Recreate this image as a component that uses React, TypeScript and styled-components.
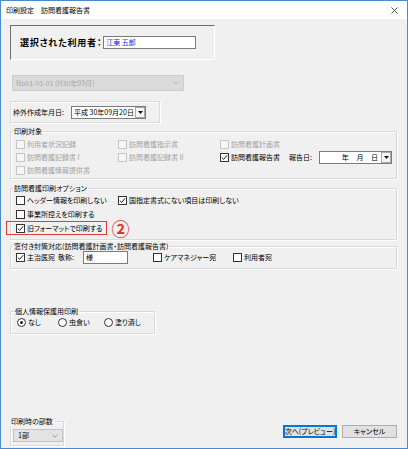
import React from 'react';
import styled, { createGlobalStyle } from 'styled-components';

const Global = createGlobalStyle`
  html, body { margin: 0; padding: 0; background: #ffffff; }
  body { font-family: "Noto Sans CJK JP", "Noto Sans", sans-serif; font-size: 7px; color: #000; }
  * { box-sizing: border-box; }
`;

const Window = styled.div`
  width: 408px;
  height: 449px;
  border: 1px solid #4a8bcf;
  background: #f0f0f0;
  display: flex;
  flex-direction: column;
  overflow: hidden;
  font-feature-settings: "palt";
`;

const TitleBar = styled.div`
  height: 18px;
  background: #ffffff;
  display: flex;
  align-items: center;
  justify-content: space-between;
  padding: 0 9px 0 5px;
  font-size: 7px;
  line-height: 9px;
`;

const Content = styled.div`
  flex: 1;
  display: flex;
  flex-direction: column;
  align-items: flex-start;
  padding: 6px 10px 2px 9px;
`;

const UserFrame = styled.div`
  width: 205px;
  height: 35px;
  border-top: 1px solid #6e6e6e;
  border-left: 1px solid #6e6e6e;
  border-right: 1px solid #ffffff;
  border-bottom: 1px solid #ffffff;
  display: flex;
  align-items: center;
  padding-left: 9px;
`;

const UserLabel = styled.span`
  font-weight: 700;
  font-size: 9px;
  letter-spacing: 0.8px;
  line-height: 12px;
  margin-right: 1px;
`;

const TextBox = styled.div<{ $w: number; $blue?: boolean }>`
  width: ${p => p.$w}px;
  height: 13px;
  flex-shrink: 0;
  background: #ffffff;
  border: 1px solid #7a7a7a;
  display: flex;
  align-items: center;
  padding-left: 2px;
  color: ${p => (p.$blue ? '#1a1ae6' : '#000')};
  line-height: 9px;
`;

const DisabledCombo = styled.div`
  margin: 15px 0 0 2px;
  width: 172px;
  height: 16px;
  background: #dadada;
  border: 1px solid #cdcdcd;
  color: #a6a6a6;
  display: flex;
  align-items: center;
  justify-content: space-between;
  padding: 0 4px 0 3px;
  line-height: 9px;
`;

const DateFrame = styled.div`
  margin-top: 10px;
  width: 150px;
  height: 22px;
  border: 1px solid #dadada;
  box-shadow: inset 1px 1px 0 #ffffff, 1px 1px 0 #ffffff;
  display: flex;
  align-items: center;
  padding-left: 2px;
`;

const FieldLabel = styled.span<{ $w?: number }>`
  ${p => (p.$w ? `width: ${p.$w}px;` : '')}
  line-height: 9px;
  white-space: nowrap;
  flex-shrink: 0;
`;

const DateBox = styled.div<{ $w: number }>`
  width: ${p => p.$w}px;
  height: 13px;
  flex-shrink: 0;
  background: #ffffff;
  border: 1px solid #7a7a7a;
  display: flex;
  align-items: center;
  justify-content: space-between;
  padding: 0 0 0 2px;
  line-height: 9px;
  white-space: nowrap;
`;

const DateText = styled.span<{ $right?: boolean }>`
  flex: 1;
  text-align: ${p => (p.$right ? 'right' : 'left')};
  padding-right: ${p => (p.$right ? '3px' : '0')};
  word-spacing: ${p => (p.$right ? '6px' : '0')};
`;

const DropBtn = styled.span`
  width: 10px;
  height: 11px;
  border: 1px solid #a8a8a8;
  background: #f4f4f4;
  display: flex;
  align-items: center;
  justify-content: center;
  flex-shrink: 0;
`;

const Group = styled.fieldset<{ $w?: number; $mt: number; $pt?: number; $pb?: number; $pl?: number }>`
  margin: ${p => p.$mt}px 0 0 0;
  padding: ${p => p.$pt ?? 0}px 4px ${p => p.$pb ?? 0}px ${p => p.$pl ?? 5}px;
  border: 1px solid #d9d9d9;
  box-shadow: inset 1px 1px 0 #ffffff, 1px 1px 0 #ffffff;
  width: ${p => (p.$w ? `${p.$w}px` : '100%')};
  min-width: 0;
`;

const Legend = styled.legend`
  padding: 0 1px;
  margin-left: -3px;
  font-size: 7px;
  line-height: 9px;
  height: 9px;
  white-space: nowrap;
`;

const Grid = styled.div<{ $row: number }>`
  display: grid;
  grid-template-columns: 102px 102px 1fr;
  grid-auto-rows: ${p => p.$row}px;
  align-items: center;
`;

const Row = styled.div<{ $h: number; $span?: boolean }>`
  height: ${p => p.$h}px;
  display: flex;
  align-items: center;
  ${p => (p.$span ? 'grid-column: 1 / span 2;' : '')}
`;

const Item = styled.label<{ $disabled?: boolean; $w?: number }>`
  display: flex;
  align-items: center;
  gap: 2px;
  color: ${p => (p.$disabled ? '#a3a3a3' : '#000')};
  line-height: 9px;
  white-space: nowrap;
  flex-shrink: 0;
  ${p => (p.$w ? `width: ${p.$w}px;` : '')}
`;

const Box = styled.span<{ $disabled?: boolean }>`
  width: 9px;
  height: 9px;
  flex-shrink: 0;
  border: 1px solid ${p => (p.$disabled ? '#c6c6c6' : '#333333')};
  background: ${p => (p.$disabled ? '#f6f6f6' : '#ffffff')};
  display: flex;
  align-items: center;
  justify-content: center;
`;

const Radio = styled.span<{ $on?: boolean }>`
  width: 9px;
  height: 9px;
  flex-shrink: 0;
  border: 1px solid #333333;
  border-radius: 50%;
  background: #ffffff;
  display: flex;
  align-items: center;
  justify-content: center;
  &::after {
    content: '';
    width: 3px;
    height: 3px;
    border-radius: 50%;
    background: ${p => (p.$on ? '#222' : 'transparent')};
  }
`;

const Highlight = styled.div`
  height: 14px;
  margin-left: -10px;
  border: 1px solid #e23b36;
  padding: 0 4px 0 9px;
  display: flex;
  align-items: center;
`;

const Circled = styled.span`
  margin-left: 4px;
  color: #e5302c;
  font-size: 18px;
  font-weight: 700;
  line-height: 14px;
`;

const Spacer = styled.span<{ $w: number }>`
  width: ${p => p.$w}px;
  flex-shrink: 0;
`;

const BottomBar = styled.div`
  margin-top: auto;
  width: 100%;
  display: flex;
  justify-content: space-between;
  align-items: flex-end;
`;

const CopyCombo = styled.div`
  width: 50px;
  height: 13px;
  background: #e3e3e3;
  border: 1px solid #c4c4c4;
  display: flex;
  align-items: center;
  justify-content: space-between;
  padding: 0 4px 0 4px;
  line-height: 9px;
`;

const Buttons = styled.div`
  display: flex;
  gap: 5px;
  margin-bottom: 8px;
`;

const Button = styled.button<{ $default?: boolean }>`
  width: ${p => (p.$default ? 54 : 55)}px;
  height: 13px;
  padding: 0;
  margin: 0;
  font-family: inherit;
  font-size: 7px;
  line-height: 9px;
  color: #000;
  background: #e1e1e1;
  border: 1px solid ${p => (p.$default ? '#0078d7' : '#adadad')};
  box-shadow: ${p => (p.$default ? 'inset 0 0 0 1px #0078d7' : 'none')};
  font-feature-settings: "palt";
`;

const Check = () => (
  <svg width="7" height="7" viewBox="0 0 7 7">
    <path d="M0.8 3.6 L2.7 5.4 L6.2 1.2" fill="none" stroke="#222" strokeWidth="1" />
  </svg>
);

const Chevron = ({ color }: { color: string }) => (
  <svg width="6" height="4" viewBox="0 0 6 4">
    <path d="M0.5 0.8 L3 3.2 L5.5 0.8" fill="none" stroke={color} strokeWidth="0.8" />
  </svg>
);

const Tri = () => (
  <svg width="5" height="3" viewBox="0 0 5 3">
    <path d="M0 0 H5 L2.5 3 Z" fill="#111" />
  </svg>
);

const CheckItem = ({ label, checked, disabled, w }: { label: string; checked?: boolean; disabled?: boolean; w?: number }) => (
  <Item $disabled={disabled} $w={w}>
    <Box $disabled={disabled}>{checked && <Check />}</Box>
    <span>{label}</span>
  </Item>
);

const RadioItem = ({ label, on, w }: { label: string; on?: boolean; w?: number }) => (
  <Item $w={w}>
    <Radio $on={on} />
    <span>{label}</span>
  </Item>
);

export default function App() {
  return (
    <>
      <Global />
      <Window>
        <TitleBar>
          <span>印刷設定　訪問看護報告書</span>
          <svg width="7" height="7" viewBox="0 0 7 7">
            <path d="M0.5 0.5 L6.5 6.5 M6.5 0.5 L0.5 6.5" stroke="#222" strokeWidth="0.8" />
          </svg>
        </TitleBar>
        <Content>
          <UserFrame>
            <UserLabel>選択された利用者：</UserLabel>
            <TextBox $w={93} $blue>江東 五郎</TextBox>
          </UserFrame>

          <DisabledCombo>
            <span>No01-01-01 (H30年09月)</span>
            <Chevron color="#b5b5b5" />
          </DisabledCombo>

          <DateFrame>
            <FieldLabel $w={58}>枠外作成年月日:</FieldLabel>
            <DateBox $w={75}>
              <DateText>平成 30年09月20日</DateText>
              <DropBtn><Tri /></DropBtn>
            </DateBox>
          </DateFrame>

          <Group $mt={4} $pt={2} $pb={1}>
            <Legend>印刷対象</Legend>
            <Grid $row={13}>
              <CheckItem label="利用者状況記録" disabled />
              <CheckItem label="訪問看護指示書" disabled />
              <CheckItem label="訪問看護計画書" disabled />
              <CheckItem label="訪問看護記録書 I" disabled />
              <CheckItem label="訪問看護記録書 II" disabled />
              <Row $h={13}>
                <CheckItem label="訪問看護報告書" checked w={69} />
                <FieldLabel $w={30}>報告日:</FieldLabel>
                <DateBox $w={73}>
                  <DateText $right>年 月 日</DateText>
                  <DropBtn><Tri /></DropBtn>
                </DateBox>
              </Row>
              <CheckItem label="訪問看護情報提供書" disabled />
            </Grid>
          </Group>

          <Group $mt={5} $pt={0} $pb={4}>
            <Legend>訪問看護印刷オプション</Legend>
            <Grid $row={14}>
              <CheckItem label="ヘッダー情報を印刷しない" />
              <CheckItem label="国指定書式にない項目は印刷しない" checked />
              <span />
              <CheckItem label="事業所控えを印刷する" />
              <span />
              <span />
              <Row $h={14} $span>
                <Highlight>
                  <CheckItem label="旧フォーマットで印刷する" checked />
                </Highlight>
                <Circled>②</Circled>
              </Row>
            </Grid>
          </Group>

          <Group $mt={2} $pt={0} $pb={4}>
            <Legend>窓付き封筒対応(訪問看護計画書・訪問看護報告書)</Legend>
            <Row $h={13}>
              <CheckItem label="主治医宛" checked />
              <Spacer $w={3} />
              <FieldLabel $w={25}>敬称:</FieldLabel>
              <TextBox $w={45}>様</TextBox>
              <Spacer $w={25} />
              <CheckItem label="ケアマネジャー宛" w={80} />
              <CheckItem label="利用者宛" />
            </Row>
          </Group>

          <Group $w={145} $mt={38} $pt={0} $pb={5} $pl={6}>
            <Legend>個人情報保護用印刷</Legend>
            <Row $h={12}>
              <RadioItem label="なし" on w={41} />
              <RadioItem label="虫食い" w={46} />
              <RadioItem label="塗り潰し" />
            </Row>
          </Group>

          <BottomBar>
            <Group $w={54} $mt={0} $pt={3} $pb={3} $pl={2}>
              <Legend>印刷時の部数</Legend>
              <CopyCombo>
                <span>1部</span>
                <Chevron color="#888" />
              </CopyCombo>
            </Group>
            <Buttons>
              <Button $default>次へ(プレビュー)</Button>
              <Button>キャンセル</Button>
            </Buttons>
          </BottomBar>
        </Content>
      </Window>
    </>
  );
}
